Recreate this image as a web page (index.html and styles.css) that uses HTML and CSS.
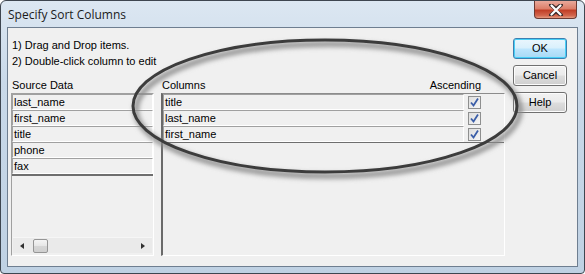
FILE: index.html
```html
<!DOCTYPE html>
<html>
<head>
<meta charset="utf-8">
<link rel="stylesheet" href="styles.css">
</head>
<body>
<div class="window">
  <div class="titlebar">
    <span class="title">Specify Sort Columns</span>
    <div class="close">
      <svg width="18" height="12" viewBox="0 0 18 12"><path d="M4 1 L9 5 L14 1 M4 11 L9 7 L14 11 M9 5 L9 7" stroke="#3a2a2a" stroke-width="4" fill="none" stroke-linecap="round"/><path d="M4.5 1.5 L13.5 10.5 M13.5 1.5 L4.5 10.5" stroke="#fff" stroke-width="2.2" fill="none" stroke-linecap="round"/></svg>
    </div>
  </div>
  <div class="client">
    <div class="main">
      <div class="instructions">
        <div>1) Drag and Drop items.</div>
        <div>2) Double-click column to edit</div>
      </div>
      <div class="panels">
        <div class="panel source">
          <div class="panel-label">Source Data</div>
          <div class="listbox">
            <div class="rows">
              <div class="row">last_name</div>
              <div class="row">first_name</div>
              <div class="row">title</div>
              <div class="row">phone</div>
              <div class="row">fax</div>
            </div>
            <div class="fill"></div>
            <div class="hscroll">
              <span class="arrow left"></span>
              <span class="track"><span class="thumb"></span></span>
              <span class="arrow right"></span>
            </div>
          </div>
        </div>
        <div class="panel columns">
          <div class="panel-label split"><span>Columns</span><span>Ascending</span></div>
          <div class="listbox">
            <div class="crow"><div class="row">title</div><div class="chk"><span class="box"><svg width="11" height="11" viewBox="0 0 11 11"><path d="M2 5.5 L4.5 8.5 L9 1.5" stroke="#3b5ea8" stroke-width="1.8" fill="none"/></svg></span></div></div>
            <div class="crow"><div class="row">last_name</div><div class="chk"><span class="box"><svg width="11" height="11" viewBox="0 0 11 11"><path d="M2 5.5 L4.5 8.5 L9 1.5" stroke="#3b5ea8" stroke-width="1.8" fill="none"/></svg></span></div></div>
            <div class="crow"><div class="row">first_name</div><div class="chk"><span class="box"><svg width="11" height="11" viewBox="0 0 11 11"><path d="M2 5.5 L4.5 8.5 L9 1.5" stroke="#3b5ea8" stroke-width="1.8" fill="none"/></svg></span></div></div>
          </div>
        </div>
      </div>
    </div>
    <div class="buttons">
      <div class="btn default">OK</div>
      <div class="btn">Cancel</div>
      <div class="btn">Help</div>
    </div>
  </div>
  <svg class="annotation" width="585" height="274" viewBox="0 0 585 274">
    <defs>
      <filter id="blur" x="-10%" y="-20%" width="120%" height="140%"><feGaussianBlur stdDeviation="2.5"/></filter>
    </defs>
    <ellipse cx="328" cy="110" rx="192" ry="66" fill="none" stroke="#8a8a8a" stroke-width="5" filter="url(#blur)"/>
    <ellipse cx="325" cy="106" rx="192" ry="66" fill="none" stroke="#3c3c3c" stroke-width="3"/>
  </svg>
</div>
</body>
</html>
```

FILE: styles.css
```css
html, body {
  margin: 0;
  padding: 0;
  background: #ffffff;
}

.window {
  position: relative;
  width: 585px;
  height: 274px;
  box-sizing: border-box;
  border: 1px solid #3e4650;
  border-radius: 6px 6px 4px 4px;
  background: linear-gradient(180deg, #dce7f2 0%, #c9d9e9 30%, #bfd1e3 100%);
  padding: 0 6px 7px 6px;
  font-family: "Liberation Sans", Arial, sans-serif;
  font-size: 11px;
  color: #000;
  overflow: hidden;
}

.titlebar {
  height: 26px;
  display: flex;
  align-items: flex-start;
  justify-content: space-between;
}

.title {
  font-family: "Open Sans", "Liberation Sans", sans-serif;
  font-size: 12px;
  line-height: 14px;
  margin-top: 7px;
  margin-left: 1px;
  color: #1b1b1b;
}

.close {
  width: 43px;
  height: 18px;
  margin-right: 1px;
  box-sizing: border-box;
  border: 1px solid #6b3a33;
  border-top: none;
  border-radius: 0 0 4px 4px;
  background: linear-gradient(180deg, #e9a99b 0%, #dc7f6a 45%, #c13e27 55%, #d2654c 85%, #e59a80 100%);
  display: flex;
  align-items: center;
  justify-content: center;
}

.client {
  height: 240px;
  box-sizing: border-box;
  border: 1px solid #6e7e90;
  background: #f0f0f0;
  display: flex;
  padding: 9px 10px 0 3px;
}

.main {
  flex: 1;
  display: flex;
  flex-direction: column;
}

.instructions {
  padding-left: 1px;
  line-height: 16px;
}

.panels {
  display: flex;
  gap: 7px;
  margin-top: 9px;
}

.panel {
  display: flex;
  flex-direction: column;
}

.source { width: 143px; }
.columns { width: 344px; }

.panel-label {
  line-height: 15px;
  padding-left: 1px;
}

.panel-label.split {
  display: flex;
  justify-content: space-between;
  padding-right: 24px;
}

.listbox {
  height: 163px;
  box-sizing: border-box;
  border-style: solid;
  border-width: 1px 1px 1px 2px;
  border-color: #8c8c8c #ffffff #ffffff #6a6a6a;
  display: flex;
  flex-direction: column;
}

.source .listbox {
  border-width: 1px;
  border-color: #a0a0a0 #ffffff #ffffff #a0a0a0;
}

.rows {
  border-bottom: 2px solid #6e6e6e;
}

.row {
  height: 16px;
  box-sizing: border-box;
  border-style: solid;
  border-width: 1px;
  border-color: #a0a0a0 #ffffff #ffffff #a0a0a0;
  line-height: 14px;
  padding-left: 1px;
  white-space: nowrap;
}

.fill { flex: 1; }

.hscroll {
  height: 15px;
  margin: 0 1px 2px 1px;
  background: #eaeaea;
  border-top: 1px solid #f6f6f6;
  display: flex;
  align-items: center;
}

.arrow {
  width: 0;
  height: 0;
  border-top: 3.5px solid transparent;
  border-bottom: 3.5px solid transparent;
}
.arrow.left {
  border-right: 4px solid #303030;
  margin-left: 7px;
}
.arrow.right {
  border-left: 4px solid #303030;
  margin-right: 7px;
}

.track {
  flex: 1;
  height: 15px;
  display: flex;
  align-items: center;
}

.thumb {
  width: 15px;
  height: 14px;
  box-sizing: border-box;
  margin-left: 9px;
  border: 1px solid #959595;
  border-radius: 2px;
  background: linear-gradient(180deg, #f4f4f4 0%, #e6e6e6 50%, #d6d6d6 51%, #cfcfcf 100%);
}

.crow {
  display: flex;
}

.crow .row {
  width: 301px;
  flex: none;
}

.chk {
  flex: 1;
  display: flex;
  align-items: center;
  padding-left: 4px;
}

.box {
  width: 13px;
  height: 13px;
  box-sizing: border-box;
  border: 1px solid #8e8f8f;
  background: linear-gradient(135deg, #dedede 0%, #f6f6f6 100%);
  display: flex;
  align-items: center;
  justify-content: center;
}

.crow:nth-child(3) {
  border-bottom: 1px solid #6e6e6e;
}

.buttons {
  width: 54px;
  margin-left: 8px;
  margin-top: 1px;
  display: flex;
  flex-direction: column;
  gap: 6px;
}

.btn {
  height: 21px;
  box-sizing: border-box;
  border: 1px solid #707070;
  border-radius: 3px;
  background: linear-gradient(180deg, #f2f2f2 0%, #ebebeb 48%, #dddddd 52%, #cfcfcf 100%);
  box-shadow: inset 0 0 0 1px #fcfcfc;
  text-align: center;
  line-height: 19px;
}

.btn.default {
  border-color: #3c7fb1;
  background: linear-gradient(180deg, #eaf6fd 0%, #d9f0fc 48%, #bee6fd 52%, #a7d9f5 100%);
  box-shadow: inset 0 0 0 1px #48d0f7;
}

.annotation {
  position: absolute;
  left: -1px;
  top: -1px;
  pointer-events: none;
}
```
